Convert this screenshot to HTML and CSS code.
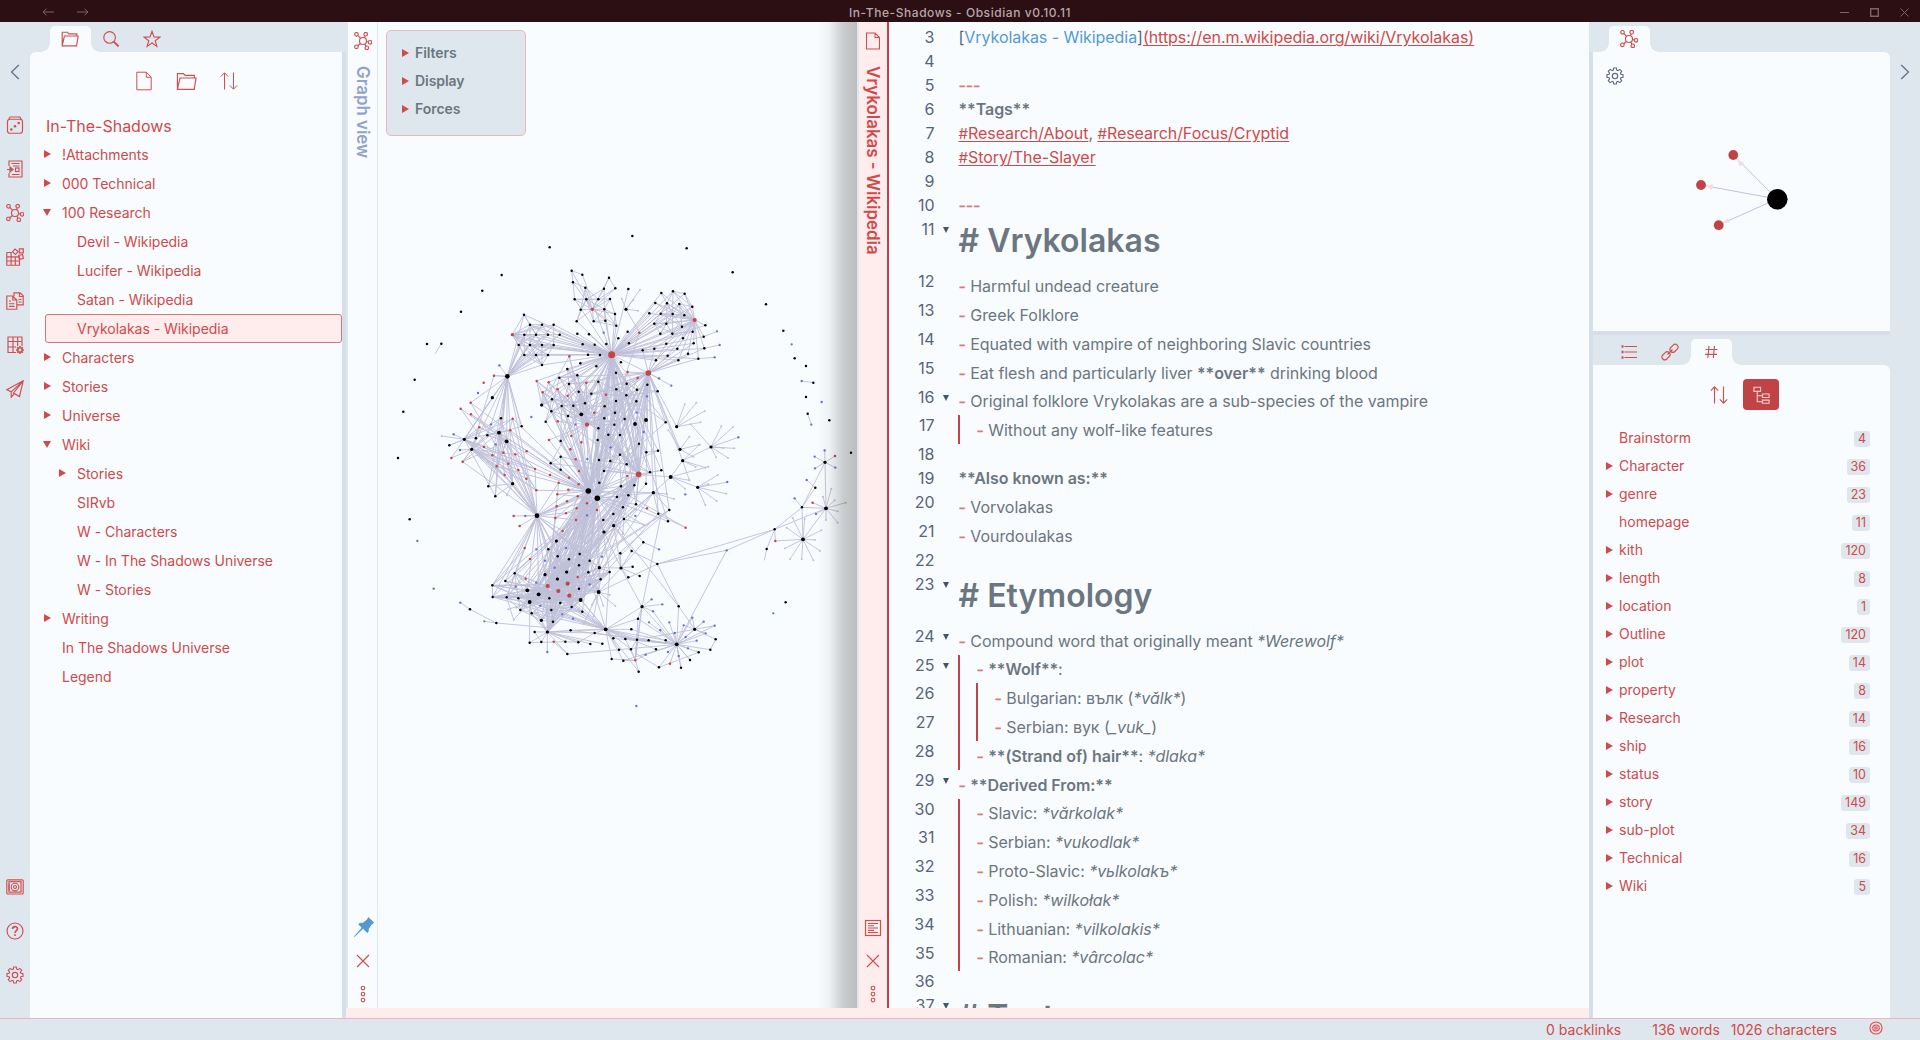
FILE: index.html
```html
<!DOCTYPE html>
<html lang="en">
<head>
<meta charset="utf-8">
<title>In-The-Shadows - Obsidian v0.10.11</title>
<link rel="stylesheet" href="styles.css">
</head>
<body>
<svg class="sprite" aria-hidden="true">
  <symbol id="folder" viewBox="0 0 18 18"><path d="M1.2 15.8V2.2h5.2l1.4 1.6h8v2M1.2 15.8 3.4 6h13.8l-1.6 9.8z"/></symbol>
  <symbol id="search" viewBox="0 0 18 18"><circle cx="7.6" cy="7.4" r="5.8"/><path d="M11.8 11.6 16.6 16.4" stroke-width="2"/></symbol>
  <symbol id="star" viewBox="0 0 18 18"><path d="M9 1.3l2 5.6 5.9.2-4.7 3.6 1.7 5.7L9 13l-4.9 3.4 1.7-5.7L1.1 7.1 7 6.9z"/></symbol>
  <symbol id="file" viewBox="0 0 18 20"><path d="M1.8 1.2h9.5l4.9 5v12.600H1.800zM11.300 1.200v5h4.900"/></symbol>
  <symbol id="sort" viewBox="0 0 18 18"><path d="M4.500 17.500V1M.8 4.600 4.500.8 8.200 4.600M13.500.5V17M9.800 13.400l3.700 3.800 3.700-3.800"/></symbol>
  <symbol id="left" viewBox="0 0 18 18"><path d="M12.800 2 5.500 9l7.300 7"/></symbol>
  <symbol id="right" viewBox="0 0 18 18"><path d="M5.200 2l7.300 7-7.300 7"/></symbol>
  <symbol id="dice" viewBox="0 0 18 18"><rect x="1.500" y="3.200" width="15" height="14" rx="2.500"/><path d="M2.800 3.200 4 1h10l1.200 2.200"/><g class="solid"><circle cx="5.300" cy="13.500" r="1.300"/><circle cx="9" cy="10.300" r="1.300"/><circle cx="12.700" cy="7" r="1.300"/></g></symbol>
  <symbol id="import" viewBox="0 0 18 18"><path d="M3 6V1h13v16H3v-4M5.500 3.500h8M7 6h6.500M6 14.500h7.500M1 9.500h5M4 7l3 2.500L4 12z"/><rect x="9.500" y="8" width="3.500" height="3.500"/></symbol>
  <symbol id="graph" viewBox="0 0 18 18"><circle cx="9" cy="9" r="3.500"/><circle cx="2.500" cy="2.300" r="1.800"/><circle cx="11.700" cy="2.200" r="1.800"/><circle cx="16" cy="10.300" r="1.800"/><circle cx="12.800" cy="15.800" r="1.800"/><circle cx="2.400" cy="14.800" r="1.800"/><path d="M3.900 3.600l2.700 2.700M11.200 4l-.8 1.800M12.500 9.700h1.800M10.800 12l1.200 2.100M6.600 11.500l-2.900 2.200"/></symbol>
  <symbol id="blocks" viewBox="0 0 18 18"><path d="M.8 4.500V17.200H13.500V8.800H.8M.8 4.500h4.300v12.700M.8 13h12.700M9.300 8.800v8.400M5.100 8.800"/><path d="M9 1l3 2.500-2.500 3L6.500 4zM13.300.8h4v4h-4zM12.500 7.500l4-1 .9 4-4 .8z"/></symbol>
  <symbol id="pages" viewBox="0 0 18 18"><path d="M8 4V.8h6.200l3 3v9h-6.200M13.500.8v3.700h3.700M.8 4h6l4 4v9.200H.8zM6.800 4v4h4M3 9h2M3 11.700h5.500M3 14.300h5.500M12.500 7.500h3M12.500 10h3"/></symbol>
  <symbol id="table" viewBox="0 0 18 18"><path d="M10 16.500H2V1h14v9M2 5.500h14M2 11h8M7 1v15.500M11.700 1v9"/><circle cx="14" cy="14" r="2.200" stroke-width="1.600"/><path d="M14 10v1.500M14 16.500V18M10 14h1.500M16.500 14H18M11.200 11.200l1.100 1.100M15.700 15.700l1.100 1.100M16.800 11.200l-1.100 1.100M12.300 15.700l-1.100 1.100" stroke-width="1.500"/></symbol>
  <symbol id="plane" viewBox="0 0 18 18"><path d="M17.200.8.8 9.800l4.400 2L17.200.8 7.500 13l6 3.500zM5.200 11.800v5.400L8.500 13.600"/></symbol>
  <symbol id="vault" viewBox="0 0 18 18"><rect x=".8" y="1.800" width="16.400" height="14.200" rx="1"/><rect x="3" y="3.700" width="12" height="10.400"/><circle cx="9" cy="9" r="3.800"/><circle cx="9" cy="9" r="1.500"/><path d="M3 5.500v7"/></symbol>
  <symbol id="help" viewBox="0 0 18 18"><circle cx="9" cy="9" r="8"/><path d="M6.600 7c0-3.200 4.900-3 4.900-.2C11.500 8.600 9 8.600 9 11M9 12.300v1.700" stroke-width="1.600"/></symbol>
  <symbol id="gear" viewBox="0 0 18 18"><circle cx="9" cy="9" r="2.700"/><path d="M7.700 1h2.600l.4 2.100 1.300.6 1.900-1.300 1.800 1.800-1.300 1.900.5 1.200 2.100.4v2.600l-2.100.4-.5 1.200 1.300 1.900-1.800 1.800-1.900-1.300-1.300.6-.4 2.100H7.700l-.4-2.100-1.300-.6-1.900 1.300-1.800-1.800 1.300-1.900-.5-1.200L1 10.300V7.700l2.100-.4.5-1.200-1.300-1.900 1.800-1.800L6 3.700l1.300-.6z"/></symbol>
  <symbol id="pin" viewBox="0 0 20 20"><path class="solid" d="M14.300 0 20 5.600l-1.500 1.700-.9.300-2.800 4.300c.2 1.800-.3 3-1.500 4.100L9 11.800.6 20l-.6-.5L7.600 10.800 4.200 7.200C5.500 6 7 5.500 8.500 5.900l4.300-3.200z"/></symbol>
  <symbol id="cross" viewBox="0 0 18 18"><path d="M3 3l12 12M15 3 3 15"/></symbol>
  <symbol id="dots" viewBox="0 0 18 18"><circle cx="9" cy="3" r="1.800"/><circle cx="9" cy="9" r="1.800"/><circle cx="9" cy="15" r="1.800"/></symbol>
  <symbol id="doc" viewBox="0 0 18 18"><rect x="1.500" y="1.500" width="15" height="15"/><path d="M4 4.500h10M4 6.700h6M4 9h10M4 11.300h6M4 13.500h10"/></symbol>
  <symbol id="list" viewBox="0 0 18 18"><path d="M4.500 3.500H17M4.500 9H17M4.500 14.500H17"/><path d="M1.500 3.500h2M1.500 9h2M1.500 14.500h2" stroke-width="2.500"/></symbol>
  <symbol id="link" viewBox="0 0 18 18"><rect x="8.500" y="2.500" width="9" height="5.600" rx="2.800" transform="rotate(-45 13 5.300)"/><rect x=".5" y="10" width="9" height="5.600" rx="2.800" transform="rotate(-45 5 12.800)"/><path d="M6.500 11.500l5-5"/></symbol>
  <symbol id="hash" viewBox="0 0 18 18"><path d="M7 3 5.800 15M12.500 3 11.300 15M3.500 6.500h12M3 11.300h12"/></symbol>
  <symbol id="tree" viewBox="0 0 18 18"><path d="M1 .8h7v4.400H1zM10 8h7v3.600h-7zM10 14.400h7v3.400h-7zM4.500 5.200v11h5.500M4.500 9.800H10"/></symbol>
  <symbol id="sync" viewBox="0 0 18 18"><circle cx="9" cy="9" r="7.800"/><path d="M13.500 8.500a4.600 4.600 0 0 0-9 .5M4.500 9.500a4.600 4.600 0 0 0 9-.5M6.800 9.500c.5-1.800 2.500-2.500 4-1.300M11.200 8.500c-.5 1.800-2.500 2.500-4 1.300"/></symbol>
</svg>

<header class="titlebar">
  <div class="history"><svg width="12" height="8" viewBox="0 0 12 8"><path d="M12 4H1M4.500.8 1 4l3.500 3.200"/></svg><svg width="12" height="8" viewBox="0 0 12 8"><path d="M0 4h11M7.500.8 11 4 7.500 7.200"/></svg></div>
  <div class="title">In-The-Shadows - Obsidian v0.10.11</div>
  <div class="window-buttons"><svg width="9" height="9" viewBox="0 0 9 9"><path d="M0 4.500h9"/></svg><svg width="9" height="9" viewBox="0 0 9 9"><path d="M.7.700h7.600v7.600H.7z" stroke-width="1.400"/></svg><svg width="9" height="9" viewBox="0 0 9 9"><path d="M.5.500l8 8M8.500.500l-8 8"/></svg></div>
</header>

<div class="workspace">
  <nav class="ribbon ribbon-left">
    <svg class="icon slate"><use href="#left"/></svg>
    <div class="ribbon-actions">
      <svg class="icon"><use href="#dice"/></svg><svg class="icon"><use href="#import"/></svg><svg class="icon"><use href="#graph"/></svg><svg class="icon"><use href="#blocks"/></svg><svg class="icon"><use href="#pages"/></svg><svg class="icon"><use href="#table"/></svg><svg class="icon"><use href="#plane"/></svg>
    </div>
    <div class="ribbon-settings">
      <svg class="icon"><use href="#vault"/></svg><svg class="icon"><use href="#help"/></svg><svg class="icon"><use href="#gear"/></svg>
    </div>
  </nav>

  <aside class="sidebar sidebar-left">
    <div class="tabs">
      <div class="tab active"><svg class="icon"><use href="#folder"/></svg></div>
      <div class="tab"><svg class="icon"><use href="#search"/></svg></div>
      <div class="tab"><svg class="icon"><use href="#star"/></svg></div>
    </div>
    <div class="panel panel-files">
      <div class="nav-buttons"><svg class="icon tall"><use href="#file"/></svg><svg class="icon big"><use href="#folder"/></svg><svg class="icon"><use href="#sort"/></svg></div>
      <div class="root">In-The-Shadows</div>
      <ul class="files">
        <li class="closed">!Attachments</li>
        <li class="closed">000 Technical</li>
        <li class="open">100 Research</li>
        <li class="sub">Devil - Wikipedia</li>
        <li class="sub">Lucifer - Wikipedia</li>
        <li class="sub">Satan - Wikipedia</li>
        <li class="sub selected">Vrykolakas - Wikipedia</li>
        <li class="closed">Characters</li>
        <li class="closed">Stories</li>
        <li class="closed">Universe</li>
        <li class="open">Wiki</li>
        <li class="sub closed">Stories</li>
        <li class="sub">SIRvb</li>
        <li class="sub">W - Characters</li>
        <li class="sub">W - In The Shadows Universe</li>
        <li class="sub">W - Stories</li>
        <li class="closed">Writing</li>
        <li>In The Shadows Universe</li>
        <li>Legend</li>
      </ul>
    </div>
  </aside>
  <div class="handle"></div>

  <main class="panes">
    <section class="pane pane-graph">
      <div class="strip">
        <svg class="icon"><use href="#graph"/></svg>
        <span class="strip-title">Graph view</span>
        <div class="strip-actions"><svg class="icon pin"><use href="#pin"/></svg><svg class="icon"><use href="#cross"/></svg><svg class="icon"><use href="#dots"/></svg></div>
      </div>
      <div class="graph">
        <svg id="network" width="479" height="986" viewBox="378 22 479 986"></svg>
        <div class="controls"><div>Filters</div><div>Display</div><div>Forces</div></div>
        <div class="shade"></div>
      </div>
    </section>
    <section class="pane pane-note">
      <div class="strip active">
        <svg class="icon"><use href="#file"/></svg>
        <span class="strip-title">Vrykolakas - Wikipedia</span>
        <div class="strip-actions"><svg class="icon"><use href="#doc"/></svg><svg class="icon"><use href="#cross"/></svg><svg class="icon"><use href="#dots"/></svg></div>
      </div>
      <div class="editor">
        <div class="line"><i>3</i><p><span class="num">[</span><span class="link">Vrykolakas - Wikipedia</span><span class="num">]</span><u>(https://en.m.wikipedia.org/wiki/Vrykolakas)</u></p></div>
        <div class="line"><i>4</i></div>
        <div class="line"><i>5</i><p><s>---</s></p></div>
        <div class="line"><i>6</i><p><b>**Tags**</b></p></div>
        <div class="line"><i>7</i><p><u><small>#</small>Research/About</u>, <u><small>#</small>Research/Focus/Cryptid</u></p></div>
        <div class="line"><i>8</i><p><u><small>#</small>Story/The-Slayer</u></p></div>
        <div class="line"><i>9</i></div>
        <div class="line"><i>10</i><p><s>---</s></p></div>
        <div class="line fold head"><i>11</i><h1># Vrykolakas</h1></div>
        <div class="line item"><i>12</i><p><s>-</s> Harmful undead creature</p></div>
        <div class="line item"><i>13</i><p><s>-</s> Greek Folklore</p></div>
        <div class="line item"><i>14</i><p><s>-</s> Equated with vampire of neighboring Slavic countries</p></div>
        <div class="line item"><i>15</i><p><s>-</s> Eat flesh and particularly liver <b>**over**</b> drinking blood</p></div>
        <div class="line item fold"><i>16</i><p><s>-</s> Original folklore Vrykolakas are a sub-species of the vampire</p></div>
        <div class="line item in1"><i>17</i><p><s>-</s> Without any wolf-like features</p></div>
        <div class="line"><i>18</i></div>
        <div class="line"><i>19</i><p><b>**Also known as:**</b></p></div>
        <div class="line item"><i>20</i><p><s>-</s> Vorvolakas</p></div>
        <div class="line item"><i>21</i><p><s>-</s> Vourdoulakas</p></div>
        <div class="line"><i>22</i></div>
        <div class="line fold head"><i>23</i><h1># Etymology</h1></div>
        <div class="line item fold"><i>24</i><p><s>-</s> Compound word that originally meant <em>*Werewolf*</em></p></div>
        <div class="line item fold in1"><i>25</i><p><s>-</s> <b>**Wolf**</b>:</p></div>
        <div class="line item in2"><i>26</i><p><s>-</s> Bulgarian: вълк (<em>*vǎlk*</em>)</p></div>
        <div class="line item in2"><i>27</i><p><s>-</s> Serbian: вук (<em>_vuk_</em>)</p></div>
        <div class="line item in1"><i>28</i><p><s>-</s> <b>**(Strand of) hair**</b>: <em>*dlaka*</em></p></div>
        <div class="line item fold"><i>29</i><p><s>-</s> <b>**Derived From:**</b></p></div>
        <div class="line item in1"><i>30</i><p><s>-</s> Slavic: <em>*vărkolak*</em></p></div>
        <div class="line item in1"><i>31</i><p><s>-</s> Serbian: <em>*vukodlak*</em></p></div>
        <div class="line item in1"><i>32</i><p><s>-</s> Proto-Slavic: <em>*vьlkolakъ*</em></p></div>
        <div class="line item in1"><i>33</i><p><s>-</s> Polish: <em>*wilkołak*</em></p></div>
        <div class="line item in1"><i>34</i><p><s>-</s> Lithuanian: <em>*vilkolakis*</em></p></div>
        <div class="line item in1"><i>35</i><p><s>-</s> Romanian: <em>*vârcolac*</em></p></div>
        <div class="line"><i>36</i></div>
        <div class="line fold head"><i>37</i><h1># Text</h1></div>
      </div>
    </section>
  </main>
  <div class="handle"></div>

  <aside class="sidebar sidebar-right">
    <div class="tabs">
      <div class="tab active"><svg class="icon"><use href="#graph"/></svg></div>
    </div>
    <div class="panel panel-local">
      <svg class="icon slate gear"><use href="#gear"/></svg>
      <svg class="local" width="297" height="279" viewBox="1593 52 297 279">
        <path d="M1777 199 1733.300 155M1777 199 1701 185M1777 199 1718.700 225" stroke="#c3c2dc" fill="none"/>
        <path d="M1737 159l7 4-4 4zM1706 186l7-2-1 6zM1723 223l4-5 3 5z" fill="#f1dfe6"/>
        <g fill="#c04346"><circle cx="1733.300" cy="155" r="4.900"/><circle cx="1701" cy="185" r="4.900"/><circle cx="1718.700" cy="225.200" r="4.900"/></g>
        <circle cx="1777.300" cy="199.200" r="10.300"/>
      </svg>
    </div>
    <div class="handle-row"></div>
    <div class="tabs">
      <div class="tab"><svg class="icon"><use href="#list"/></svg></div>
      <div class="tab"><svg class="icon"><use href="#link"/></svg></div>
      <div class="tab active"><svg class="icon"><use href="#hash"/></svg></div>
    </div>
    <div class="panel panel-tags">
      <div class="tag-buttons"><svg class="icon"><use href="#sort"/></svg><span class="toggle"><svg class="icon"><use href="#tree"/></svg></span></div>
      <ul class="tags">
        <li>Brainstorm<span>4</span></li>
        <li class="closed">Character<span>36</span></li>
        <li class="closed">genre<span>23</span></li>
        <li>homepage<span>11</span></li>
        <li class="closed">kith<span>120</span></li>
        <li class="closed">length<span>8</span></li>
        <li class="closed">location<span>1</span></li>
        <li class="closed">Outline<span>120</span></li>
        <li class="closed">plot<span>14</span></li>
        <li class="closed">property<span>8</span></li>
        <li class="closed">Research<span>14</span></li>
        <li class="closed">ship<span>16</span></li>
        <li class="closed">status<span>10</span></li>
        <li class="closed">story<span>149</span></li>
        <li class="closed">sub-plot<span>34</span></li>
        <li class="closed">Technical<span>16</span></li>
        <li class="closed">Wiki<span>5</span></li>
      </ul>
    </div>
  </aside>
  <nav class="ribbon ribbon-right"><svg class="icon slate"><use href="#right"/></svg></nav>
</div>

<footer class="statusbar"><span class="backlinks">0 backlinks</span><span>136 words</span><span>1026 characters</span><svg class="icon"><use href="#sync"/></svg></footer>
<script src="graph.js"></script>
</body>
</html>
```
FILE: styles.css
```css
* { box-sizing: border-box; }
body { margin: 0; width: 1920px; height: 1040px; overflow: hidden; display: flex; flex-direction: column; background: #dfe7ee; color: #cf4a4a; font: 14px "Inter", "Noto Sans", sans-serif; }
ul { list-style: none; margin: 0; padding: 0; }
.sprite { display: none; }
.icon { display: block; width: 18px; height: 18px; fill: none; stroke: #cf4f4f; stroke-width: 1.15; overflow: visible; flex: none; }
.icon.slate { stroke: #5c6a80; }
.solid { fill: #cf4f4f; stroke: none; }

.titlebar { height: 22px; background: #2b0f12; display: grid; grid-template-columns: 1fr auto 1fr; align-items: center; flex: none; }
.titlebar svg { fill: none; stroke: #7d6567; }
.history { display: flex; gap: 23px; padding: 1px 0 0 42px; }
.title { color: #b5a8a9; font-size: 12px; font-weight: 500; letter-spacing: .56px; padding-top: 2px; }
.window-buttons { display: flex; gap: 21px; justify-content: flex-end; padding: 2px 11px 0 0; }

.workspace { height: 996px; display: grid; grid-template-columns: 30px 312px 4px 1243px 4px 297px 30px; flex: none; }
.ribbon { display: flex; flex-direction: column; align-items: center; padding-top: 41px; }
.ribbon-actions { display: flex; flex-direction: column; gap: 26px; margin-top: 35px; }
.ribbon-settings { display: flex; flex-direction: column; gap: 26px; margin-top: auto; padding-bottom: 34px; }

.sidebar { display: flex; flex-direction: column; min-height: 0; }
.tabs { height: 30px; display: flex; padding: 4px 0 0 20px; flex: none; }
.sidebar-right .tabs { padding-left: 16px; }
.tab { width: 41px; height: 26px; display: flex; align-items: center; justify-content: center; position: relative; }
.tab .icon { margin-left: -1px; margin-top: -1px; }
.tab.active { background: #f9fcff; border-radius: 5px 5px 0 0; }
.tab.active::before, .tab.active::after { content: ""; position: absolute; bottom: 0; width: 9px; height: 9px; }
.tab.active::before { left: -9px; background: radial-gradient(circle at 0 0, #dfe7ee 8.500px, #f9fcff 9px); }
.tab.active::after { right: -9px; background: radial-gradient(circle at 100% 0, #dfe7ee 8.500px, #f9fcff 9px); }
.panel { background: #f9fcff; }
.panel-files { flex: 1; border-radius: 6px 0 0 0; padding-top: 20px; }
.nav-buttons { display: flex; justify-content: center; align-items: center; gap: 23px; height: 18px; }
.icon.tall { height: 20px; }
.icon.big { width: 21px; height: 21px; }
.nav-buttons .icon { stroke-width: 1; }
.root { font-size: 16px; line-height: 20px; padding: 26px 0 0 16px; }
.files { margin-top: 4px; letter-spacing: -.03px; }
.files li { height: 29px; line-height: 30px; padding-left: 32px; position: relative; }
.files li.sub { padding-left: 47px; }
.files li.selected { background: #ffecec; border: 1px solid #d0787c; border-radius: 3px; margin-left: 15px; padding-left: 31px; line-height: 28px; }
.closed::before, .open::before { content: ""; position: absolute; left: 14px; top: 10px; border: solid transparent; border-width: 4px 0 4px 7px; border-left-color: #cf4a4a; }
.open::before { left: 13px; top: 11px; border-width: 7px 4px 0; border-color: #cf4a4a transparent transparent; }
.sub.closed::before { left: 29px; }
.handle { background: #d5deea; margin-top: 30px; }

.panes { background: #ffecec; display: grid; grid-template-columns: 511px 732px; padding-bottom: 10px; min-height: 0; }
.pane { display: flex; min-height: 0; overflow: hidden; background: #f9fcff; border-left: 2px solid #dfe7ee; }
.strip { width: 30px; border-right: 1px solid #dfe6ef; display: flex; flex-direction: column; align-items: center; padding-top: 10px; flex: none; }
.strip-title { writing-mode: vertical-rl; font-size: 16.900px; font-weight: 600; line-height: 22px; margin-top: 16px; color: #91a3c6; }
.strip-actions { margin-top: auto; display: flex; flex-direction: column; align-items: center; gap: 15px; padding-bottom: 5px; }
.icon.pin { width: 20px; height: 20px; margin-left: 2px; }
#pin .solid { fill: #5599d0; }
.strip.active { background: #ffecec; border-right: 2px solid #c04346; }
.strip.active .strip-title { color: #cf4a4a; }
.graph { position: relative; width: 479px; }
.graph svg { display: block; }
.controls { position: absolute; left: 8px; top: 8px; width: 140px; height: 106px; background: #dfe7ee; border: 1px solid #ebb7bd; border-radius: 5px; padding-top: 8px; color: #6b7680; font-weight: 600; letter-spacing: -.05px; }
.controls div { line-height: 28px; padding-left: 28px; position: relative; }
.controls div::before { content: ""; position: absolute; left: 15px; top: 10px; border: solid transparent; border-width: 4px 0 4px 7px; border-left-color: #cf4a4a; }
.shade { position: absolute; right: 0; top: 0; width: 40px; height: 100%; background: linear-gradient(90deg, rgba(0,0,0,0), rgba(0,0,0,.04) 30%, rgba(0,0,0,.19) 65%, rgba(0,0,0,.25)); }

.editor { flex: 1; font-size: 16px; color: #6b7680; padding-top: 3.400px; overflow: hidden; }
.line { display: flex; height: 24px; line-height: 24px; position: relative; white-space: pre; }
.line > i { font-style: normal; width: 45.500px; text-align: right; color: #56647c; margin-right: 24px; flex: none; }
.line p { margin: 0; letter-spacing: -.05px; }
.num { color: #56647c; }
.link { color: #5599d3; }
.line u { color: #cf4a4a; text-underline-offset: 2px; }
.line small { font-size: 15px; }
.line s { text-decoration: none; color: #e07777; -webkit-text-stroke: .3px #e07777; }
.line b { font-weight: 600; }
.item { height: 28.800px; }
.item p { padding-top: 4.800px; }
.head { height: 52px; }
.line h1 { margin: 0; font-size: 32px; font-weight: 600; line-height: 38px; padding-top: 5px; }
.in1 p { padding-left: 18px; }
.in2 p { padding-left: 36px; }
.in1::before, .in2::before { content: ""; position: absolute; left: 69px; top: 2px; height: 28.800px; width: 2px; background: #c04346; }
.in2::before { width: 16px; border: solid #c04346; border-width: 0 2px; background: none; }
.fold::after { content: ""; position: absolute; left: 54px; top: 10px; border: 3.500px solid transparent; border-width: 6px 3.500px 0; border-top-color: #46546a; }

.sidebar-right .panel { border-radius: 0 6px 0 0; }
.panel-local { height: 279px; position: relative; flex: none; }
.gear { position: absolute; left: 13px; top: 15px; }
.local { display: block; }
.handle-row { height: 4px; background: #d5deea; flex: none; }
.panel-tags { flex: 1; padding: 14px 20px 0 0; }
.tag-buttons { display: flex; align-items: center; padding-left: 117px; gap: 15px; }
.toggle { background: #c04346; width: 36px; height: 31px; border-radius: 4px; display: flex; align-items: center; justify-content: center; }
.toggle .icon { stroke: #f3cfd0; width: 17px; height: 18px; }
.tags { margin-top: 14px; }
.tags li { height: 28px; line-height: 28px; padding-left: 26px; display: flex; align-items: center; justify-content: space-between; position: relative; }
.tags li::before { left: 13px; }
.tags span { background: #dfe7ee; border-radius: 3px; font-size: 12.500px; height: 16px; line-height: 16px; padding: 0 4px; margin-top: 2px; }

.statusbar { height: 22px; border-top: 1px solid #ebb7bd; display: flex; align-items: center; justify-content: flex-end; gap: 11px; padding-right: 37px; flex: none; }
.backlinks { margin-right: 20px; }
.statusbar .icon { width: 14px; height: 14px; margin: -3px 0 0 21px; stroke: #ee4444; stroke-width: 1.400; }
```
FILE: graph.js
```js
// Node coordinates are stored in thirds of a pixel.
const svg = document.getElementById('network');
const NS = 'http://www.w3.org/2000/svg';
const pts = s => s.trim().split(/\s+/).map(p => p.split(',').map(Number));
let seed = 7;
const rnd = () => (seed = (seed * 16807) % 2147483647) / 2147483647;
let edges = '';
const link = (a, b) => { edges += `M${a[0]} ${a[1]}L${b[0]} ${b[1]}`; };
const fan = (hub, list, p = 1) => list.forEach(n => { if (rnd() < p) link(hub, n); });
const mesh = (list, dist, p) => list.forEach((a, i) => list.slice(i + 1).forEach(b => {
  if (Math.hypot(a[0] - b[0], a[1] - b[1]) < dist && rnd() < p) link(a, b);
}));

const lone = pts('697,48 449,82 860,85 998,157 305,165 247,212 183,275 81,372 124,371 44,479 10,575 -6,714 1098,253 1150,332 1184,415 1218,438 1240,488 1218,531 1223,581 1288,601 1353,698 29,898 1157,1147');
const loneBlue = pts('52,963 101,1106 709,1458 1120,1180 1175,373 1265,546 1205,483 1234,614');
const crown = pts('515,152 547,164 519,187 556,203 524,238 559,238 595,238 630,237 612,206 646,205 627,173 542,269 613,268 530,304 581,304 616,302 645,282 649,317');
const crownRest = pts('532,341 567,343 548,373 584,374 619,372 564,404 600,405 655,355 683,335 687,370 685,207 663,427 589,439 541,430');
const wing = pts('784,219 819,214 854,221 766,249 801,250 838,252 877,260 748,280 782,281 818,282 853,286 763,311 799,311 846,320 916,316 878,335 781,341 817,341 849,355 911,350');
const wingLow = pts('799,371 881,370 763,386 832,386 728,391 913,385 864,401 803,407 835,421 768,421 895,416');
const west = pts('372,284 390,314 426,314 461,314 373,344 408,344 444,344 479,344 356,375 390,375 426,375 461,375 373,405 408,405 444,405 426,435');
const midBlack = pts('478,473 502,447 532,466 507,492 595,485 536,515 574,521 648,458 680,491 649,508 679,526 711,509 742,494 773,514 456,538 425,555 485,558 520,557 555,550 504,588 454,574 437,605 614,559 648,543 709,544 645,578 674,597 613,595 643,614 595,625 625,644 660,645 593,660 482,663 717,671 482,710 452,730 482,749 739,697 774,692 660,704 597,720 631,723 680,733 612,753 750,757 784,751 797,607');
const midRed = pts('508,409 410,483 446,487 428,517 473,508 503,527 559,489 618,524 583,578 473,604 514,648 447,660 544,667 511,688 527,718 537,753 507,773 683,456 713,474 718,338 682,768 450,765 536,793 472,823 505,809 533,829 470,859 501,844 530,865 561,850 591,870 466,894 498,880 528,900 488,933 476,788');
const redWest = pts('282,467 251,488 212,548 182,566 213,583 238,622 338,596 331,631 252,681 277,706 310,698 346,703 380,694 290,739 325,731 314,765 355,750 405,747 379,776 409,811 154,714 188,725');
const blackWest = pts('277,533 303,595 262,646 228,655 365,619 148,676 265,799 286,829 338,791');
const lower = pts('598,788 663,799 703,796 738,791 651,831 685,826 669,862 640,882 708,853 760,818 808,870 775,881 804,904 672,897 610,900 641,917 612,936 469,963 445,988 473,1009 507,1018 539,1002 537,1036 569,1022 435,1064 500,1056 472,1077 565,1057 598,1043 602,1078 629,1056 537,1106 448,1135 416,1123 382,1111 355,1135 320,1132 278,1131 277,1096 316,1083 344,1060 481,1149 515,1161 547,1175 454,1170 424,1201 459,1205 395,1180 361,1170 442,1236');
const fringe = pts('210,1168 289,1209 389,1268 424,1266 404,1236 496,1265 535,1267 571,1272 607,1271 502,1302 512,1231 584,1239 640,1255 676,1257 694,1228 711,1259 746,1261 714,1196 657,1289 693,1288 635,1317 670,1322 768,1288 797,1261 716,1355 777,1342 843,1343 870,1320 896,1297 931,1289 947,1258 836,1159');
const chain = pts('730,967 695,993 661,1000 698,1040 719,1068 685,1072 772,1032');
const blue = pts('611,338 298,436 234,519 273,613 161,643 287,673 180,690 394,591 526,614 632,682 562,717 561,886 376,888 741,529 710,578 731,636 777,475 814,497 951,334 959,375 944,412 1015,652 982,786 856,823 706,888 777,988 606,1010 498,984 409,988 435,1022 464,1043 569,1093 347,1100 409,1088 421,1157 487,1183 519,1196 181,1148 253,1204 442,1296 755,1138 787,1153 759,1174 747,1207 781,1230 808,1207 851,1216 824,1239 857,1251 877,1193 911,1205 944,1217 917,1240 890,1262 864,1285 804,1296 836,1308 737,1304 980,991 1274,691 1244,710 1245,745 1306,743 1220,780 1184,835 1248,882');

const H = { a: [635,404], b: [745,459], c: [322,469], d: [565,813], e: [592,835], f: [716,763], g: [411,887], h: [561,614], w: [884,300], t: [577,268], l: [337,344] };
const core = pts('389,1146 443,1098 475,1113 503,1091 508,1127 542,1140');
const westHubs = pts('297,638 320,664 193,658 215,688');

fan(H.t, crown, .85); fan(H.a, crown, .5); mesh(crown, 75, .45); fan(H.a, crownRest);
fan(H.w, wing); fan(H.a, wing, .9); fan(H.w, wingLow, .9); fan(H.b, wingLow); fan(H.a, wingLow, .8); mesh(wing, 75, .35);
fan(H.l, west); fan(H.a, west, .95); fan(H.c, west); mesh(west, 80, .4);
fan(H.a, midBlack, .6); fan(H.b, midBlack, .38); fan(H.h, midBlack.slice(0, 30), .4); fan(H.f, midBlack, .55); fan(H.e, midBlack, .48); fan(H.d, midBlack, .3);
mesh(midBlack, 110, .35); fan(H.d, midRed, .75); fan(H.e, midRed, .35); fan(H.g, midRed.slice(20), .35); fan(H.h, midRed.slice(0, 14)); fan([544,583], midRed.slice(0, 9)); fan([425,555], midRed.slice(0, 6));
fan(H.a, midRed.slice(0, 10), .7);
[...pts('544,583 705,612 738,600')].forEach(n => { link(n, H.a); link(n, H.b); link(n, H.f); link(n, H.e); });
westHubs.forEach(n => { fan(n, redWest, .45); fan(n, blackWest, .4); link(n, H.d); link(n, H.g); link(n, [338,791]); });
fan(H.c, redWest, .35); fan(H.c, blackWest, .7); fan(H.g, redWest, .4); fan(H.c, westHubs); fan(H.d, redWest, .4);
[H.c, H.d, H.e, H.f, [338,791]].forEach(n => link(H.g, n));
[H.b, H.h, H.f, H.e, H.d].forEach(n => link(H.a, n));
[H.f, H.e, [705,612], [830,620], [840,688], [848,722]].forEach(n => link(H.b, n));
fan(H.d, lower, .35); fan(H.e, lower, .5); fan(H.f, lower.slice(0, 34), .55); fan(H.g, lower.slice(17, 44), .45);
core.forEach(n => { fan(n, lower.slice(16), .65); fan(n, lower.slice(0, 16), .3); link(n, H.e); link(n, H.d); link(n, H.f); });
mesh(core, 200, 1); mesh(lower.slice(16), 100, .35); fan([617,1228], lower.slice(26), .42); fan([617,1228], core);
fan([442,1236], lower.slice(17, 36), .7);
fan(H.a, lower.slice(0, 24), .4); fan(H.b, lower.slice(0, 12), .4); fan(core[1], midRed.slice(20), .4);
fan([617,1228], fringe.slice(10, 25)); fan([830,1273], fringe.slice(10, 29), .7); fan([596,1116], lower.slice(20, 36), .7);
fan([442,1236], fringe.slice(2, 12)); mesh(fringe.slice(3, 22), 60, .2);
fan([663,1044], chain.slice(0, 6)); fan([663,1044], pts('641,917 612,936 596,1116 598,1043 726,1160')); link([672,897], [730,967]); link([730,967], [777,988]); link([641,917], [695,993]); link([695,993], [772,1032]); link([596,1116], [772,1032]); link([772,1032], [836,1159]); link([719,1010], [836,1159]); link([641,917], [719,1010]); link([784,881], [726,1160]); link([706,1300], [726,1160]);
fan([726,1160], pts('617,1228 714,1196 706,1321 830,1273 755,1138 787,1153 759,1174')); fan([706,1321], pts('676,1257 711,1259 693,1288 670,1322 635,1317 716,1355 737,1304 714,1196'));
fan([884,1228], pts('836,1159 877,1193 911,1205 944,1217 917,1240 947,1258 830,1273 711,1259 851,1216')); fan([830,1273], blue.slice(42, 59)); fan([830,1273], pts('843,1343 870,1320 896,1297 931,1289 810,1331'));
[[[210,1168],[181,1148]],[[210,1168],[289,1209]],[[253,1204],[289,1209]],[[289,1209],[442,1223]],[[389,1146],[389,1268]],[[389,1268],[496,1265]],[[461,1265],[502,1302]],[[502,1302],[657,1289]],[[947,1258],[931,1289]],[[777,1342],[896,1297]],[[777,1342],[706,1300]],[[442,1296],[442,1236]],[[277,1096],[278,1131]],[[277,1096],[375,985]],[[316,1083],[390,1017]],[[320,1132],[341,1199]],[[836,1159],[830,1273]],[[124,371],[105,402]],[[1205,483],[1240,488]],[[1223,581],[1234,614]]].forEach(e => link(...e));
// Eastern constellation
fan([772,1032], pts('980,991 1124,928')); link([980,991], [1124,928]);
fan([1124,928], pts('1206,862 1278,865 1100,987 1126,963')); link([1100,987], [1093,1021]); link([1126,963], [1209,958]);
fan([1206,862], pts('1184,835 1246,803 1278,865 1209,958 1275,727'));
fan([1275,727], pts('1274,691 1244,710 1245,745 1306,743 1305,708 1278,865')); link([1220,780], [1246,803]);
// Unresolved notes fan out from their parent
const faint = [];
const spokes = (h, list) => pts(list).forEach(n => { faint.push(n); link(h, n); });
spokes([678,268], '665,236 720,209 700,240 714,272 720,340'); spokes([830,620], '854,553 889,548 914,573 902,607');
spokes([840,688], '805,630 899,674 868,650 880,710'); spokes([848,722], '916,743 887,741 898,674 868,781');
spokes([933,681], '872,613 964,619 999,621 970,684 1003,685 984,714 948,712 848,722 1015,652'); spokes([893,802], '953,765 979,821 950,843 916,855 980,787 925,792');
spokes([812,771], '893,802 848,722 760,818 716,763 855,806 868,781 925,740'); spokes([760,818], '808,870 775,881 822,837 801,822');
spokes([1209,958], '1160,923 1178,894 1214,897 1264,931 1245,960 1260,993 1240,1021 1205,1018 1170,1017 1155,985 1278,865');
spokes([1278,865], '1269,830 1294,806 1304,841 1337,848 1313,874 1313,908 1278,900 1238,848 1248,882');
spokes([193,658], '125,648 161,643 148,676'); spokes([215,688], '180,690 154,714 188,725 243,714'); spokes(H.c, '282,467 298,436 309,550 361,609');
spokes([338,791], '265,799 286,829 320,826'); spokes(H.g, '341,888 359,918 376,888 394,918'); spokes([596,1116], '576,1154 610,1157 646,1158 629,1125 581,1189 551,1211');
spokes(H.e, '731,914 669,939 560,970 515,983'); link([708,853], [857,923]); link([685,826], [857,923]); spokes([672,897], '731,914 668,943 708,868'); spokes([389,1146], '325,1168 341,1199 349,1163');
fan(H.b, pts('777,475 814,497 741,529 773,514 683,456 713,474 797,607')); fan([911,350], pts('951,334')); fan([913,385], pts('959,375')); fan([895,416], pts('944,412'));

const dots = (list, r, c) => list.map(n => `<circle cx="${n[0]}" cy="${n[1]}" r="${r}" fill="${c}"/>`).join('');
const red = '#c64444', black = '#000', tint = '#5d72dc';
const g = document.createElementNS(NS, 'g');
g.setAttribute('transform', 'translate(400 220) scale(.33333)');
g.innerHTML = `<path d="${edges}" fill="none" stroke="#bebfd8" stroke-width="2.700"/>`
  + dots(faint, 3, '#bfc0cd')
  + [lone, crown, crownRest, wing, wingLow, west, midBlack, lower, fringe, chain, blackWest, pts('1124,928 1206,862 1246,803 1100,987')].map(l => dots(l, 3.7, black)).join('')
  + dots([...loneBlue, ...blue], 3.5, tint)
  + dots([...midRed, ...redWest, ...pts('374,984 390,1017 377,1076 533,1071 461,1265 706,1321 810,1331 741,865 857,923 341,888 359,918 1305,708 1238,848 1126,963')], 3.7, red)
  + dots(pts('678,268 277,533 425,555 830,620 840,688 848,722 933,681 893,802 760,818 663,1044 726,1160 1275,727 338,791 469,963 612,936 641,917 598,1043 884,1228 193,658 215,688 424,1201 442,1236 435,1064 500,1056 472,1077'), 4.8, black)
  + dots(pts('544,583 705,612 738,600 297,638 320,664 812,771 596,1116 542,1140 389,1146 617,1228 830,1273 1209,958 1278,865 382,1111 416,1123'), 5.8, black)
  + dots([H.c, H.g], 7, black) + dots([H.d, H.e], 8.3, black)
  + dots([H.t, H.l], 5, red) + dots([H.h, H.w, ...core.slice(1, 5)], 6.3, red)
  + dots([H.f, H.b], 8.5, red) + dots([H.a], 10.5, red);
svg.appendChild(g);
```
